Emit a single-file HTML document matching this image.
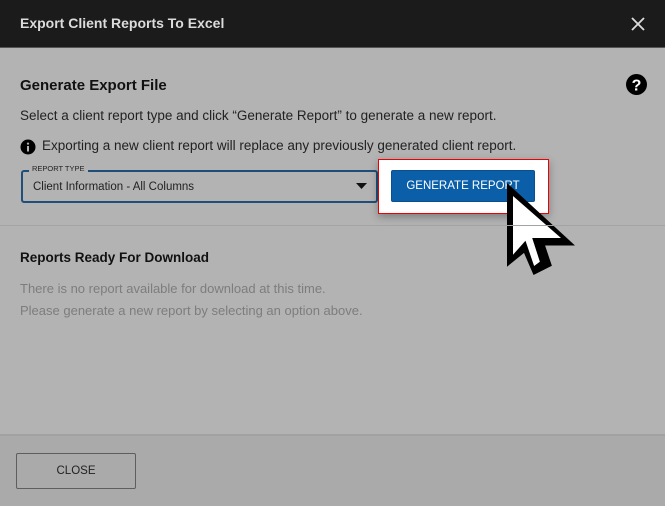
<!DOCTYPE html>
<html><head><meta charset="utf-8"><style>
*{margin:0;padding:0;box-sizing:border-box}
body{width:665px;height:506px;overflow:hidden;background:#b3b3b3;font-family:"Liberation Sans","DejaVu Sans",sans-serif;position:relative;color:#1e1e1e}
.hdr{position:absolute;left:0;top:0;width:665px;height:48px;background:#1b1b1b;border-bottom:1px solid #555}
.hdr .t{position:absolute;left:20px;top:15px;color:#dcdcdc;font-size:14px;font-weight:bold}
.a{position:absolute;white-space:nowrap}
.foot{position:absolute;left:0;top:434px;width:665px;height:72px;background:#aaaaaa;border-top:2px solid #a2a2a2}
.cb{position:absolute;left:507px;top:183px;width:68px;height:92px;background:#000;clip-path:polygon(0 0,0 91%,25% 76%,39% 100%,66% 90%,56% 68%,100% 68%)}
.cw{position:absolute;left:513px;top:196px;width:48px;height:70px;background:#fff;clip-path:polygon(0 0,0 84%,26% 64%,44% 100%,56% 94%,40% 60%,100% 60%)}
</style></head><body>
<div class="hdr"><div class="t">Export Client Reports To Excel</div>
<svg style="position:absolute;left:631px;top:17px" width="14" height="14"><path d="M1 1L13 13M13 1L1 13" stroke="#ddd" stroke-width="1.8"/></svg></div>
<div class="a" style="left:20px;top:77px;font-size:15px;font-weight:bold;color:#111">Generate Export File</div>
<svg class="a" style="left:626px;top:74px" width="21" height="21"><circle cx="10.5" cy="10.5" r="10.5" fill="#000"/><text x="10.5" y="16.5" font-size="16" font-weight="bold" fill="#fff" text-anchor="middle" font-family="Liberation Sans">?</text></svg>
<div class="a" style="left:20px;top:108px;font-size:13.5px;color:#222">Select a client report type and click “Generate Report” to generate a new report.</div>
<svg class="a" style="left:20px;top:139px" width="16" height="16"><circle cx="8" cy="8" r="7.5" fill="#000"/><rect x="7" y="7" width="2" height="5.5" fill="#b3b3b3"/><circle cx="8" cy="4.6" r="1.1" fill="#b3b3b3"/></svg>
<div class="a" style="left:42px;top:138px;font-size:13.5px;color:#222">Exporting a new client report will replace any previously generated client report.</div>
<div class="a" style="left:21px;top:170px;width:357px;height:33px;border:2px solid #1f4e7a;border-radius:3px"></div>
<div class="a" style="left:29px;top:164px;font-size:7.5px;background:#b3b3b3;padding:0 3px;color:#222">REPORT TYPE</div>
<div class="a" style="left:33px;top:181px;font-size:11.5px;color:#222">Client Information - All Columns</div>
<svg class="a" style="left:356px;top:183px" width="11" height="7"><path d="M0 0H11L5.5 6Z" fill="#111"/></svg>
<div class="a" style="left:378px;top:159px;width:171px;height:55px;background:#fff;border:1px solid #e00;box-shadow:0 3px 8px rgba(0,0,0,.3)"></div>
<div class="a" style="left:391px;top:170px;width:144px;height:32px;background:#0b5fa8;border:1px solid #0a4f8e;border-radius:2px;color:#fff;font-size:11.5px;text-align:center;line-height:30px">GENERATE REPORT</div>
<div class="cb"></div><div class="cw"></div>
<div class="a" style="left:0;top:225px;width:665px;height:1px;background:#a3a3a3"></div>
<div class="a" style="left:20px;top:250px;font-size:13.5px;font-weight:bold;color:#111">Reports Ready For Download</div>
<div class="a" style="left:20px;top:281px;font-size:13px;color:#7d7d7d">There is no report available for download at this time.</div>
<div class="a" style="left:20px;top:303px;font-size:13px;color:#7d7d7d">Please generate a new report by selecting an option above.</div>
<div class="foot"></div>
<div class="a" style="left:16px;top:453px;width:120px;height:36px;border:1px solid #5e5e5e;border-radius:2px;font-size:11.5px;text-align:center;line-height:34px;color:#222">CLOSE</div>
</body></html>
